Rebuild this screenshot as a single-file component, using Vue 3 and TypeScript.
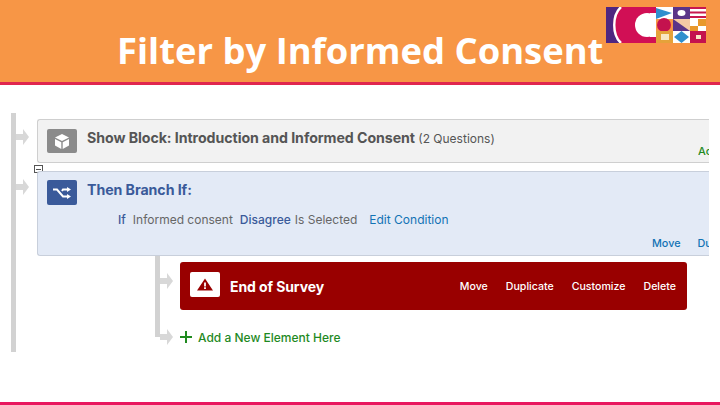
<script setup lang="ts">
const actions: string[] = ['Move', 'Duplicate', 'Customize', 'Delete']
</script>

<template>
  <div class="slide">
    <header class="head">
      <h1 class="title">Filter by Informed Consent</h1>
      <svg class="logo" width="100" height="36" viewBox="0 0 100 36">
        <rect width="50" height="36" fill="#d10f55" />
        <path d="M0 0H14C5 8 5 28 14 36H0Z" fill="#4f2680" />
        <path d="M15 0C6 8 6 28 15 36" fill="none" stroke="#fff" stroke-width="2.4" />
        <circle cx="41" cy="18" r="12" fill="#fff" />
        <rect x="44" y="6" width="6" height="24" fill="#fff" />
        <rect x="50" width="17" height="12" fill="#fff" />
        <path d="M50 1L66 6L50 12Z" fill="#2f8fce" />
        <rect x="67" width="17" height="12" fill="#5a3488" />
        <ellipse cx="75.500" cy="6" rx="4" ry="3" fill="#fff" />
        <rect x="84" width="16" height="12" fill="#fff" />
        <path d="M84 1H100M84 5.500H100M84 10H100" stroke="#c8174f" stroke-width="2" />
        <rect x="50" y="12" width="17" height="12" fill="#f79646" />
        <circle cx="58" cy="18" r="7" fill="#c4124e" />
        <rect x="67" y="12" width="17" height="12" fill="#f4c9a5" />
        <path d="M67 12L84 24H67Z" fill="#5a3488" />
        <rect x="84" y="12" width="16" height="12" fill="#fff" />
        <rect x="84" y="19" width="8" height="5" fill="#e8982c" />
        <rect x="92" y="12" width="8" height="7" fill="#e8982c" />
        <rect x="50" y="24" width="17" height="12" fill="#e5a23a" />
        <rect x="55" y="27" width="8" height="6" fill="#f8e6c4" />
        <rect x="67" y="24" width="17" height="12" fill="#fff" />
        <path d="M75.500 24L83 30L75.500 36L68 30Z" fill="#2f8fce" />
        <rect x="84" y="24" width="16" height="12" fill="#c4124e" />
        <rect x="90" y="28" width="5" height="4" fill="#f8e6c4" />
      </svg>
    </header>

    <main class="board">
      <div class="flow">
        <section class="card show">
          <span class="tile tile-grey">
            <svg width="16" height="17" viewBox="0 0 16 17">
              <path d="M8 1L15 4.500L8 8L1 4.500Z" fill="#fff" />
              <path d="M1 6L7.300 9.200V16L1 12.500Z" fill="#fff" />
              <path d="M15 6L8.700 9.200V16L15 12.500Z" fill="#fff" />
            </svg>
          </span>
          <p class="heading dark">Show Block: Introduction and Informed Consent <span class="count">(2 Questions)</span></p>
          <span class="cut add">Add</span>
        </section>

        <span class="toggle"></span>

        <section class="card branch">
          <span class="tile tile-blue">
            <svg width="18" height="12" viewBox="0 0 18 12">
              <path d="M0 2.500H4L10 9.500H14" fill="none" stroke="#fff" stroke-width="2" />
              <path d="M9 4L10 2.500H14" fill="none" stroke="#fff" stroke-width="2" />
              <path d="M14 0L18 2.500L14 5ZM14 7L18 9.500L14 12Z" fill="#fff" />
            </svg>
          </span>
          <p class="heading blue">Then Branch If:</p>
          <p class="cond">
            <b>If</b><span class="name">Informed consent</span><b class="pick">Disagree</b><span class="sel">Is Selected</span><span class="edit">Edit Condition</span>
          </p>
          <p class="tools"><span>Move</span><span class="dup">Du</span></p>
        </section>

        <div class="sub">
          <section class="end">
            <span class="tile tile-white">
              <svg width="16" height="13" viewBox="0 0 18 16" preserveAspectRatio="none">
                <path fill-rule="evenodd" d="M9 0.500L18 15.500H0ZM8 5.500V10.500H10V5.500ZM8 11.500V13.500H10V11.500Z" fill="#990000" />
              </svg>
            </span>
            <strong class="end-name">End of Survey</strong>
            <nav class="end-actions">
              <span v-for="a in actions" :key="a">{{ a }}</span>
            </nav>
          </section>
          <p class="new">
            <svg width="12" height="12" viewBox="0 0 12 12">
              <path d="M6 0V12M0 6H12" stroke="#1f8a1f" stroke-width="2" />
            </svg>
            Add a New Element Here
          </p>
        </div>
      </div>
    </main>
  </div>
</template>

<style>
html, body { margin: 0; background: #fff; }
</style>

<style scoped>
.slide {
  width: 720px;
  height: 405px;
  display: flex;
  flex-direction: column;
  overflow: hidden;
  box-sizing: border-box;
  border-bottom: 3px solid #e8185f;
  font-family: Inter, "Liberation Sans", sans-serif;
  background: #fff;
}
p { margin: 0; }
.head {
  height: 85px;
  flex: none;
  box-sizing: border-box;
  background: #f79646;
  border-bottom: 3px solid #e0264f;
  display: flex;
  align-items: flex-start;
  padding: 7px 0 0 117px;
  gap: 3px;
}
.title {
  margin: 5px 0 0;
  color: #fff;
  font: 700 36.4px/76px "Open Sans", sans-serif;
  white-space: nowrap;
  width: 486px;
  flex: none;
}
.logo { flex: none; }
.board { flex: 1; overflow: hidden; padding: 28px 0 0 11px; }
.flow {
  position: relative;
  width: 698px;
  height: 239px;
  box-sizing: border-box;
  border-left: 5px solid #d2d2d2;
  padding: 6px 0 0 21px;
  display: flex;
  flex-direction: column;
}
.card {
  position: relative;
  box-sizing: border-box;
  flex: none;
  border: 1px solid #cfcfcf;
  border-right: none;
  border-radius: 3px 0 0 3px;
}
.card::before,
.new::before,
.end::before {
  content: "";
  position: absolute;
  left: -22px;
  top: 14px;
  width: 7px;
  height: 6px;
  background: #d8d8d8;
}
.card::after,
.new::after,
.end::after {
  content: "";
  position: absolute;
  left: -15px;
  top: 9px;
  border-left: 6px solid #d8d8d8;
  border-top: 8px solid transparent;
  border-bottom: 8px solid transparent;
}
.show { height: 44px; background: #f2f2f2; }
.branch { height: 85px; margin-top: 8px; background: #e3eaf6; border-color: #c8cfdb; }
.branch::before { top: 12px; }
.branch::after { top: 7px; }
.toggle {
  position: absolute;
  left: 18px;
  top: 52px;
  width: 7px;
  height: 6px;
  border: 1px solid #555;
  background: linear-gradient(#555, #555) center / 5px 1px no-repeat #fff;
}
.tile {
  position: absolute;
  left: 9px;
  top: 9px;
  width: 30px;
  height: 24px;
  border-radius: 2px;
  display: flex;
  align-items: center;
  justify-content: center;
}
.tile-grey { background: #8b8b8b; }
.tile-blue { top: 8px; height: 25px; background: #3a5a9a; }
.tile-white { left: 10px; height: 25px; background: #fff; }
.heading {
  position: absolute;
  left: 49px;
  top: 8px;
  font-size: 14.2px;
  font-weight: 700;
  letter-spacing: -0.07px;
  line-height: 20px;
  white-space: nowrap;
}
.dark { color: #555; }
.blue { color: #3a5a9a; }
.count { font-size: 12px; font-weight: 400; letter-spacing: 0; }
.cut { position: absolute; right: 0; white-space: nowrap; overflow: hidden; }
.add { top: 24px; width: 11px; font-size: 11px; color: #1f8a1f; font-weight: 500; }
.cond {
  position: absolute;
  left: 80px;
  top: 39px;
  display: flex;
  font-size: 12px;
  line-height: 18px;
  color: #666;
  white-space: nowrap;
}
.cond b { font-weight: 500; color: #3a5a9a; }
.name { margin-left: 7px; }
.pick { margin-left: 7px; }
.sel { margin-left: 4px; }
.edit { margin-left: 12px; color: #1273b5; }
.tools {
  position: absolute;
  left: 614px;
  top: 64px;
  right: 0;
  display: flex;
  overflow: hidden;
  font-size: 10.8px;
  line-height: 16px;
  color: #1273b5;
  font-weight: 500;
  white-space: nowrap;
}
.dup { margin-left: 17px; }
.sub {
  width: 532px;
  margin: 0 0 0 118px;
  height: 81px;
  flex: none;
  box-sizing: border-box;
  border-left: 5px solid #d2d2d2;
  padding: 6px 0 0 20px;
}
.end {
  position: relative;
  height: 48px;
  background: #990000;
  border-radius: 3px;
  display: flex;
  align-items: center;
  color: #fff;
}
.end::before { left: -20px; top: 16px; }
.end::after { left: -13px; top: 11px; }
.end .tile-white { top: 10px; }
.end-name { margin-left: 50px; font-size: 14px; font-weight: 700; letter-spacing: -0.1px; }
.end-actions {
  margin-left: auto;
  display: flex;
  gap: 18px;
  padding-right: 11px;
  font-size: 10.6px;
  font-weight: 500;
}
.new {
  position: relative;
  margin-top: 19px;
  height: 16px;
  display: flex;
  align-items: center;
  gap: 6px;
  font-size: 12px;
  font-weight: 500;
  color: #1f8a1f;
  white-space: nowrap;
}
.new::before { left: -20px; top: 5px; }
.new::after { left: -13px; top: 0; }
</style>
